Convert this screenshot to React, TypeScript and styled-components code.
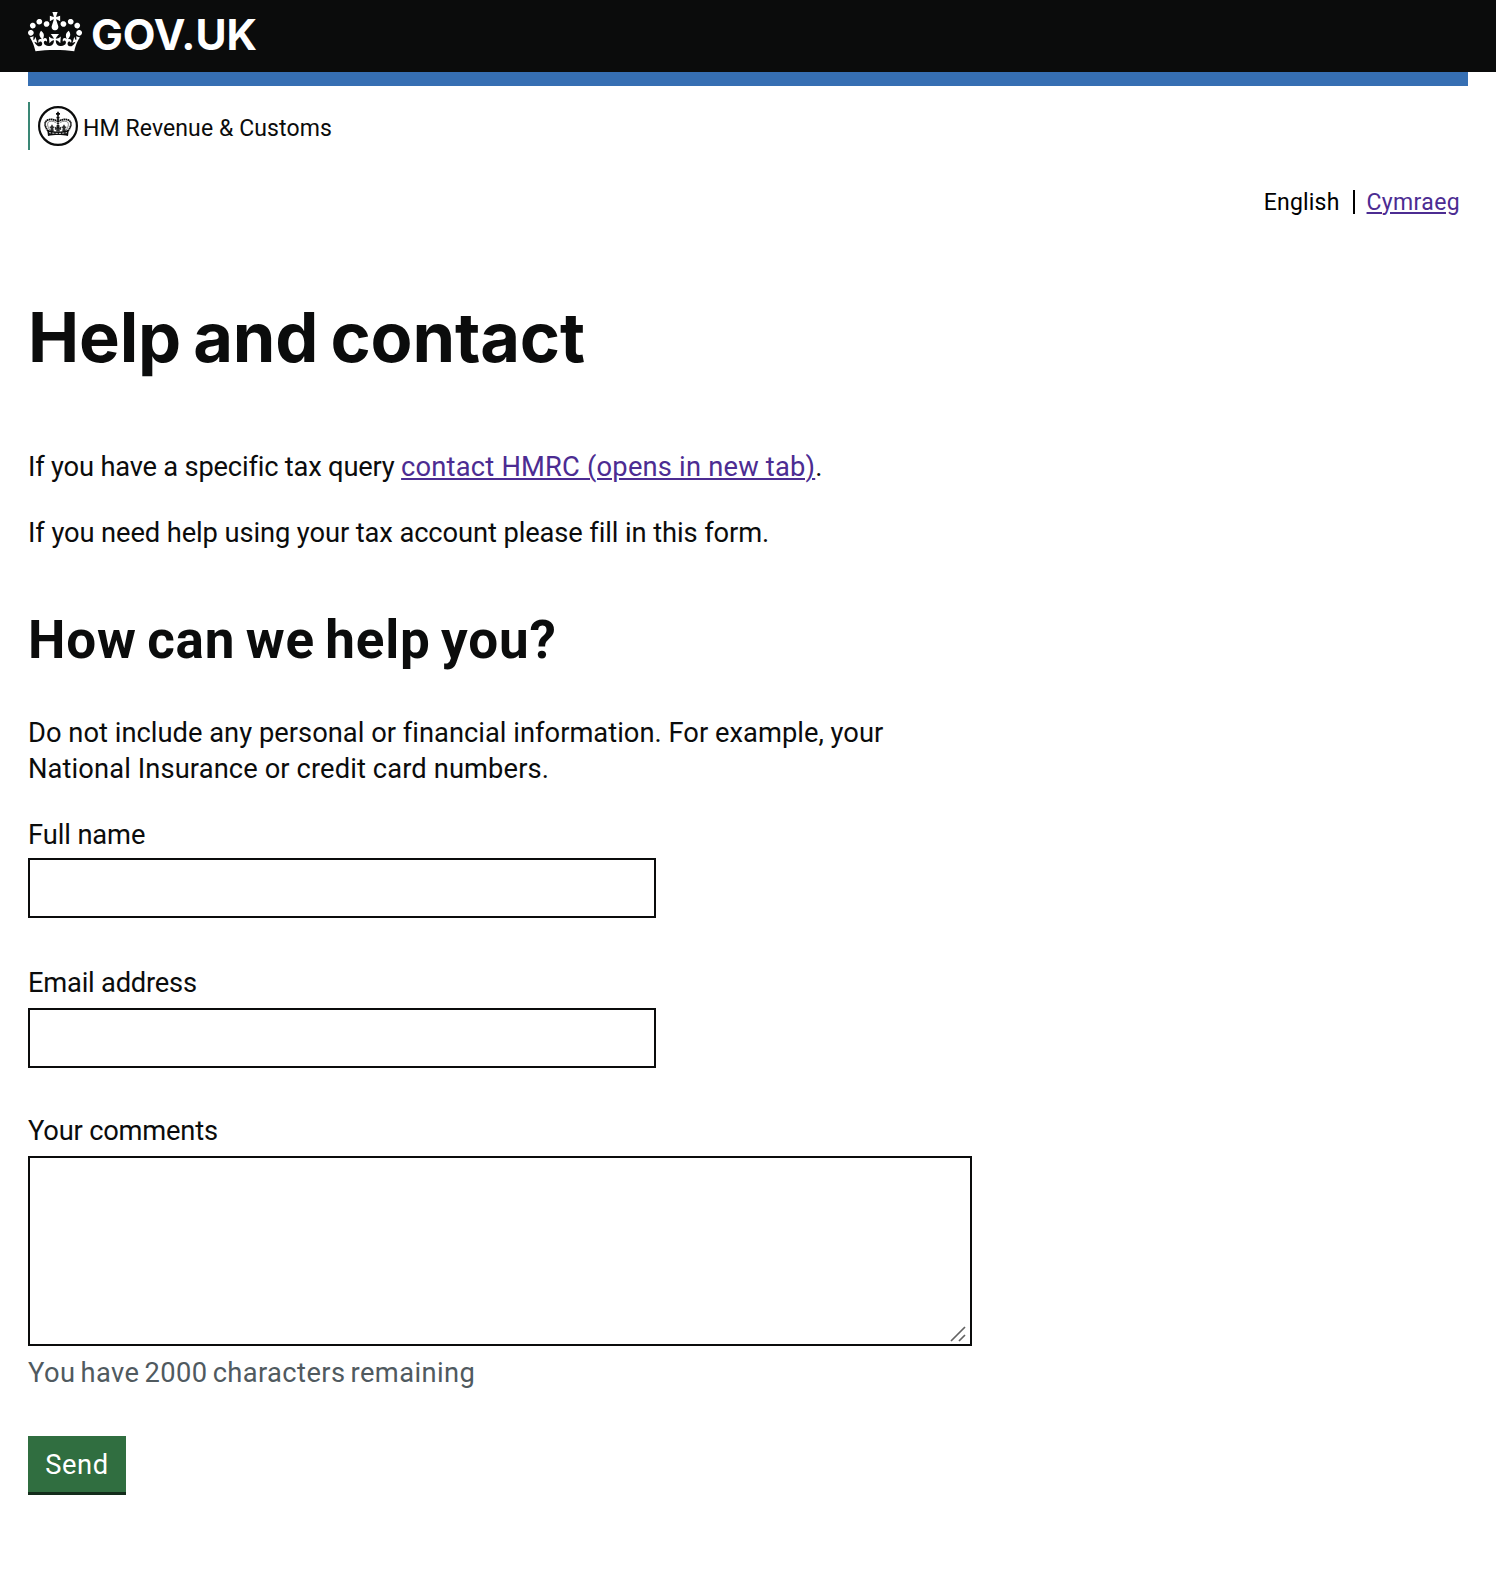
import React from "react";
import styled, { createGlobalStyle } from "styled-components";

const INK = "#0b0c0c";
const LINK = "#4c2c92";

const GlobalStyle = createGlobalStyle`
  *, *::before, *::after { box-sizing: border-box; }
  body {
    margin: 0;
    background: #fff;
    color: ${INK};
    font-family: Roboto, "Liberation Sans", Arial, sans-serif;
    font-size: 27.3px;
    line-height: 36px;
  }
`;

const Page = styled.div`
  min-height: 1594px;
  background: #fff;
`;

const Header = styled.header`
  display: flex;
  height: 72px;
  padding: 12px 28px 0;
  background: ${INK};
  color: #fff;
`;

const Crown = styled.svg`
  flex: none;
  width: 54px;
  height: 39.7px;
  fill: currentColor;
`;

const Wordmark = styled.span`
  margin: 1px 0 0 9px;
  font: 700 42.5px/44px Inter, "Liberation Sans", Arial, sans-serif;
  letter-spacing: -0.1px;
`;

const Container = styled.div`
  display: flex;
  flex-direction: column;
  margin: 0 28px;
`;

const BlueBar = styled.div`
  height: 14px;
  background: #366fb3;
`;

const Organisation = styled.div`
  display: flex;
  align-items: center;
  height: 48px;
  margin-top: 16px;
  padding-left: 8px;
  border-left: 2px solid #3a8775;
`;

const Crest = styled.svg`
  flex: none;
  width: 40px;
  height: 40px;
`;

const OrganisationName = styled.span`
  padding: 5px 0 0 5px;
  font-size: 23px;
  line-height: 30px;
  letter-spacing: 0.1px;
`;

const LanguageNav = styled.nav`
  display: flex;
  justify-content: flex-end;
  align-items: center;
  height: 24px;
  margin-top: 40px;
  padding-right: 8px;
  font-size: 23px;
  line-height: 24px;
  letter-spacing: 0.2px;
  color: #000;
`;

const CurrentLanguage = styled.span`
  height: 24px;
  padding: 1px 13px 0 0;
  border-right: 2px solid #000;
  margin-right: 12px;
`;

const Link = styled.a<{ $tracking?: number }>`
  color: ${LINK};
  letter-spacing: ${(p) => p.$tracking ?? 0}px;
  text-decoration: underline;
  text-decoration-thickness: 2px;
  text-underline-offset: 2px;
`;

const LanguageLink = styled(Link)`
  padding-top: 1px;
`;

const PageTitle = styled.h1`
  margin: 84px 0 71px;
  font-family: Inter, Roboto, sans-serif;
  font-size: 68.5px;
  line-height: 80px;
  font-weight: 700;
  letter-spacing: -0.15px;
  word-spacing: -4px;
`;

const SectionTitle = styled.h2`
  margin: 59px 0 45px;
  font-size: 53px;
  line-height: 60px;
  font-weight: 700;
  letter-spacing: 0.8px;
  word-spacing: -3.5px;
`;

const Paragraph = styled.p`
  max-width: 880px;
  margin: 0 0 30px;
`;

const Tracked = styled.span<{ $tracking: number }>`
  letter-spacing: ${(p) => p.$tracking}px;
`;

const Form = styled.form`
  display: flex;
  flex-direction: column;
  align-items: flex-start;
`;

const Field = styled.div<{ $gap: number; $after: number }>`
  display: flex;
  flex-direction: column;
  gap: ${(p) => p.$gap}px;
  margin-bottom: ${(p) => p.$after}px;
`;

const Label = styled.label<{ $tracking: number }>`
  letter-spacing: ${(p) => p.$tracking}px;
`;

const TextInput = styled.input`
  width: 628px;
  height: 60px;
  padding: 6px;
  border: 2px solid ${INK};
  border-radius: 0;
  background: #fff;
  font: inherit;
`;

const CommentsBox = styled.div`
  position: relative;
  width: 944px;
  height: 190px;
`;

const CommentsInput = styled.textarea`
  display: block;
  width: 100%;
  height: 100%;
  padding: 6px;
  border: 2px solid ${INK};
  border-radius: 0;
  background: #fff;
  font: inherit;
  resize: none;
`;

const ResizeGrip = styled.svg`
  position: absolute;
  right: 6px;
  bottom: 4.5px;
  width: 16px;
  height: 16px;
  pointer-events: none;
`;

const Hint = styled.div`
  margin: 9px 0 45px;
  color: #505a5f;
  letter-spacing: 0.4px;
  word-spacing: -2px;
`;

const SendButton = styled.button`
  width: 98px;
  height: 56px;
  padding: 2px 0 0;
  border: 0;
  border-radius: 0;
  background: #306e40;
  box-shadow: 0 3px 0 #132c1b;
  color: #fff;
  font: inherit;
  letter-spacing: 0.6px;
`;

const CROWN_PATH =
  "M25 30.2c3.5 1.5 7.7-.2 9.1-3.7 1.5-3.6-.2-7.8-3.9-9.2-3.6-1.4-7.6.3-9.1 3.9-1.4 3.5.3 7.5 3.9 9zM9 39.5c3.6 1.5 7.8-.2 9.2-3.7 1.5-3.6-.2-7.8-3.9-9.1-3.6-1.5-7.6.2-9.1 3.8-1.4 3.5.3 7.5 3.8 9zM4.4 57.2c3.5 1.5 7.7-.2 9.1-3.8 1.5-3.6-.2-7.7-3.9-9.1-3.5-1.5-7.6.3-9.1 3.8-1.4 3.5.3 7.6 3.9 9.1zm38.3-21.4c3.5 1.5 7.7-.2 9.1-3.8 1.5-3.6-.2-7.7-3.9-9.1-3.6-1.5-7.6.3-9.1 3.8-1.3 3.6.4 7.7 3.9 9.1zm64.4-5.6c-3.6 1.5-7.8-.2-9.1-3.7-1.5-3.6.2-7.8 3.8-9.2 3.6-1.4 7.7.3 9.2 3.9 1.3 3.5-.4 7.5-3.9 9zm15.9 9.3c-3.6 1.5-7.7-.2-9.1-3.7-1.5-3.6.2-7.8 3.7-9.1 3.6-1.5 7.7.2 9.2 3.8 1.5 3.5-.3 7.5-3.8 9zm4.7 17.7c-3.6 1.5-7.8-.2-9.2-3.8-1.5-3.6.2-7.7 3.9-9.1 3.6-1.5 7.7.3 9.2 3.8 1.3 3.5-.4 7.6-3.9 9.1zM89.3 35.8c-3.6 1.5-7.8-.2-9.2-3.8-1.4-3.6.2-7.7 3.9-9.1 3.6-1.5 7.7.3 9.2 3.8 1.4 3.6-.3 7.7-3.9 9.1zM69.7 17.7l8.9 4.7V9.3l-8.9 2.8c-.2-.3-.5-.6-.9-.9L72.4 0H59.6l3.5 11.2c-.3.3-.6.5-.9.9l-8.8-2.8v13.1l8.8-4.7c.3.3.6.7.9.9l-5 15.4v.1c-.2.8-.4 1.6-.4 2.4 0 4.1 3.1 7.5 7 8.1h.2c.3 0 .7.1 1 .1.4 0 .7 0 1-.1h.2c4-.6 7.1-4.1 7.1-8.1 0-.8-.1-1.7-.4-2.4V34l-5.1-15.4c.4-.2.7-.6 1-.9zM66 92.8c16.9 0 32.8 1.1 47.1 3.2 4-16.9 8.9-26.7 14-33.5l-9.6-3.4c1 4.9 1.1 7.2 0 10.2-1.5-1.4-3-4.3-4.2-8.7L108.6 76c2.8-2 5-3.2 7.5-3.3-4.4 9.4-10 11.9-13.6 11.2-4.3-.8-6.3-4.6-5.6-7.9 1-4.7 5.7-5.9 8-.5 4.3-8.7-3-11.4-7.6-8.8 7.1-7.2 7.9-13.5 2.1-21.1-8 6.1-8.1 12.3-4.5 20.8-4.7-5.4-12.1-2.5-9.5 6.2 3.4-5.2 7.9-2 7.2 3.1-.6 4.3-6.4 7.8-13.5 7.2-10.3-.9-10.9-8-11.2-13.8 2.5-.5 7.1 1.8 11 7.3L80.2 60c-4.1 4.4-8 5.3-12.3 5.4 1.4-4.4 8-11.6 8-11.6H55.5s6.4 7.2 7.9 11.6c-4.2-.1-8-1-12.3-5.4l1.4 16.4c3.9-5.5 8.5-7.7 10.9-7.3-.3 5.8-.9 12.8-11.1 13.8-7.2.6-12.9-2.9-13.5-7.2-.7-5 3.8-8.3 7.1-3.1 2.7-8.7-4.6-11.6-9.4-6.2 3.7-8.5 3.6-14.7-4.6-20.8-5.8 7.6-5 13.9 2.2 21.1-4.7-2.6-11.9.1-7.7 8.8 2.3-5.5 7.1-4.2 8.1.5.7 3.3-1.3 7.1-5.7 7.9-3.5.7-9-1.8-13.5-11.2 2.5.1 4.7 1.3 7.5 3.3l-4.7-15.4c-1.2 4.4-2.7 7.2-4.3 8.7-1.1-3-.9-5.3 0-10.2l-9.5 3.4c5 6.9 9.9 16.7 14 33.5 14.8-2.1 30.8-3.2 47.7-3.2z";

function HmrcCrest() {
  return (
    <Crest viewBox="0 0 40 40" fill="none" stroke={INK} aria-hidden="true">
      <circle cx="20" cy="20" r="18.9" strokeWidth="2.2" />
      {/* orb and cross */}
      <path d="M20 5.8v4.2M18 7.9h4" strokeWidth="1.7" />
      <circle cx="20" cy="11.4" r="1.5" fill={INK} stroke="none" />
      {/* beaded arches */}
      <g strokeWidth="1.8" strokeDasharray="1.6 .4">
        <path d="M10.2 25C6.200 20.600 6 15.200 10 13.900c3.800-1.200 8.200 0 10 2" />
        <path d="M29.800 25c4-4.400 4.200-9.800.2-11.100-3.800-1.200-8.200 0-10 2" />
        <path d="M20 13v10" />
      </g>
      <g strokeWidth=".7" opacity=".7">
        <path d="M12 24.2c-3-3.8-3-7.8-.8-8.6 2.800-1 6 .2 7.400 1.600" />
        <path d="M28 24.200c3-3.800 3-7.800.8-8.600-2.800-1-6 .2-7.400 1.600" />
      </g>
      {/* fleurs-de-lis and centre cross */}
      <path
        d="M14 18.3l1.3 2.3 1.6.5-1.6 1.2.5 2.7h-3.6l.5-2.7-1.6-1.2 1.6-.5zM26 18.3l1.3 2.3 1.6.5-1.6 1.2.5 2.7h-3.6l.5-2.7-1.6-1.2 1.6-.5zM18 19.4h4l-.9 2 2-.7v3.4l-1.6-.5.5 1.8h-4l.5-1.8-1.6.5v-3.4l2 .7z"
        fill={INK}
        stroke="none"
        opacity=".85"
      />
      {/* jewelled band */}
      <path
        d="M9.2 23.6c3.4 1.6 7 2 10.8 2s7.4-.4 10.8-2l-.8 6.3c-3-.6-6.4-.8-10-.8s-7 .2-10 .8z"
        fill={INK}
        stroke="none"
      />
      <path d="M11 26.6c5.8 1.1 12.2 1.1 18 0" stroke="#fff" strokeWidth=".8" strokeDasharray="2.2 1.1" />
    </Crest>
  );
}

export default function App() {
  return (
    <Page>
      <GlobalStyle />
      <Header>
        <Crown viewBox="0 0 132 97" aria-hidden="true">
          <path d={CROWN_PATH} />
        </Crown>
        <Wordmark>GOV.UK</Wordmark>
      </Header>
      <Container>
        <BlueBar />
        <Organisation>
          <HmrcCrest />
          <OrganisationName>HM Revenue &amp; Customs</OrganisationName>
        </Organisation>
        <LanguageNav>
          <CurrentLanguage>English</CurrentLanguage>
          <LanguageLink href="#" $tracking={0.35}>
            Cymraeg
          </LanguageLink>
        </LanguageNav>
        <main>
          <PageTitle>Help and contact</PageTitle>
          <Paragraph>
            <Tracked $tracking={-0.2}>If you have a specific tax query </Tracked>
            <Link href="#" $tracking={0.2}>
              contact HMRC (opens in new tab)
            </Link>
            .
          </Paragraph>
          <Paragraph>
            <Tracked $tracking={-0.1}>
              If you need help using your tax account please fill in this form.
            </Tracked>
          </Paragraph>
          <SectionTitle>How can we help you?</SectionTitle>
          <Paragraph>
            <Tracked $tracking={0.02}>
              Do not include any personal or financial information. For example, your{" "}
            </Tracked>
            <Tracked $tracking={0.11}>National Insurance or credit card numbers.</Tracked>
          </Paragraph>
          <Form>
            <Field $gap={5} $after={47}>
              <Label htmlFor="name" $tracking={-0.1}>Full name</Label>
              <TextInput id="name" type="text" />
            </Field>
            <Field $gap={7} $after={45}>
              <Label htmlFor="email" $tracking={-0.22}>Email address</Label>
              <TextInput id="email" type="email" />
            </Field>
            <Field $gap={7} $after={0}>
              <Label htmlFor="comments" $tracking={-0.2}>Your comments</Label>
              <CommentsBox>
                <CommentsInput id="comments" />
                <ResizeGrip viewBox="0 0 16 16" aria-hidden="true">
                  <path d="M1 15 15 1M9 15l6-6" stroke="#636363" strokeWidth="1.7" />
                </ResizeGrip>
              </CommentsBox>
            </Field>
            <Hint>You have 2000 characters remaining</Hint>
            <SendButton type="button">Send</SendButton>
          </Form>
        </main>
      </Container>
    </Page>
  );
}
